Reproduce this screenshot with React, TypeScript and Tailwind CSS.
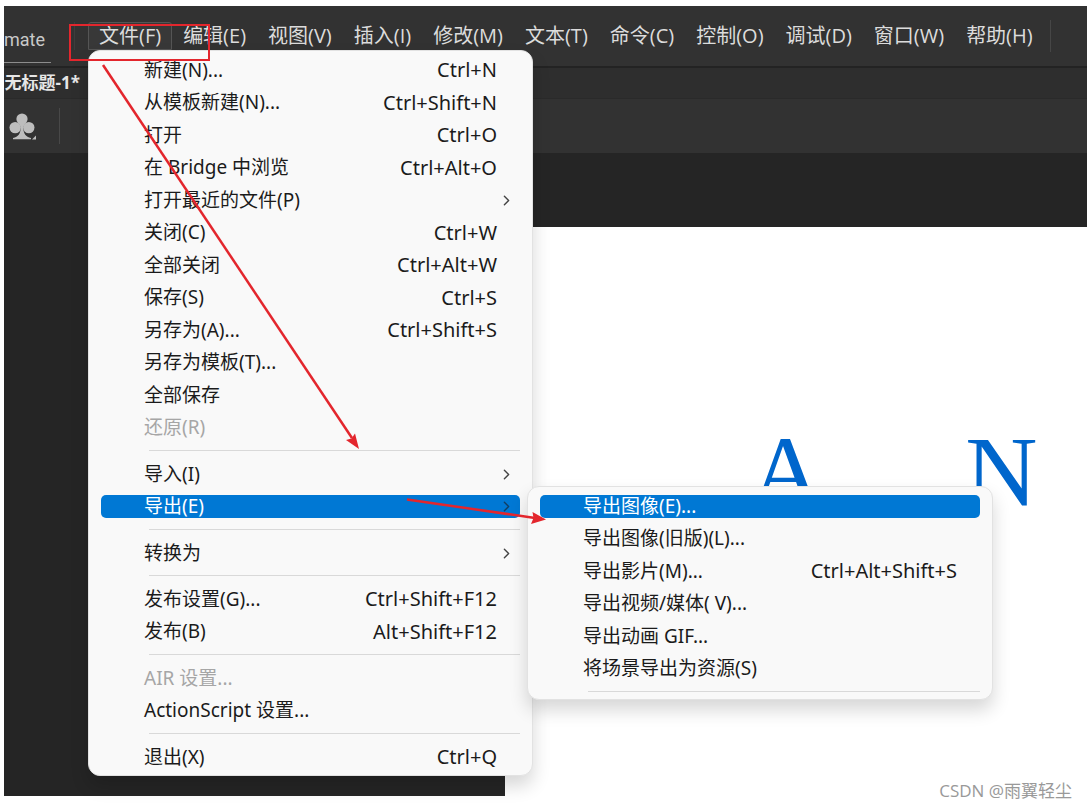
import { useState } from 'react';
import { ChevronRight } from 'lucide-react';

interface MenuEntry {
  label: string;
  shortcut?: string;
  disabled?: boolean;
  children?: boolean;
  submenu?: MenuEntry[][];
}

const menuBar = [
  '文件(F)',
  '编辑(E)',
  '视图(V)',
  '插入(I)',
  '修改(M)',
  '文本(T)',
  '命令(C)',
  '控制(O)',
  '调试(D)',
  '窗口(W)',
  '帮助(H)',
];

const exportMenu: MenuEntry[][] = [
  [
    { label: '导出图像(E)...' },
    { label: '导出图像(旧版)(L)...' },
    { label: '导出影片(M)...', shortcut: 'Ctrl+Alt+Shift+S' },
    { label: '导出视频/媒体( V)...' },
    { label: '导出动画 GIF...' },
    { label: '将场景导出为资源(S)' },
  ],
  [],
];

const fileMenu: MenuEntry[][] = [
  [
    { label: '新建(N)...', shortcut: 'Ctrl+N' },
    { label: '从模板新建(N)...', shortcut: 'Ctrl+Shift+N' },
    { label: '打开', shortcut: 'Ctrl+O' },
    { label: '在 Bridge 中浏览', shortcut: 'Ctrl+Alt+O' },
    { label: '打开最近的文件(P)', children: true },
    { label: '关闭(C)', shortcut: 'Ctrl+W' },
    { label: '全部关闭', shortcut: 'Ctrl+Alt+W' },
    { label: '保存(S)', shortcut: 'Ctrl+S' },
    { label: '另存为(A)...', shortcut: 'Ctrl+Shift+S' },
    { label: '另存为模板(T)...' },
    { label: '全部保存' },
    { label: '还原(R)', disabled: true },
  ],
  [
    { label: '导入(I)', children: true },
    { label: '导出(E)', children: true, submenu: exportMenu },
  ],
  [{ label: '转换为', children: true }],
  [
    { label: '发布设置(G)...', shortcut: 'Ctrl+Shift+F12' },
    { label: '发布(B)', shortcut: 'Alt+Shift+F12' },
  ],
  [
    { label: 'AIR 设置...', disabled: true },
    { label: 'ActionScript 设置...' },
  ],
  [{ label: '退出(X)', shortcut: 'Ctrl+Q' }],
];

interface MenuPanelProps {
  groups: MenuEntry[][];
  initial: string;
  className: string;
}

function MenuPanel({ groups, initial, className }: MenuPanelProps) {
  const [active, setActive] = useState(initial);

  return (
    <div
      className={`absolute z-10 rounded-xl border border-[#e2e2e2] bg-[#f9f9f9] font-['Noto_Sans','Noto_Sans_CJK_SC',sans-serif] text-[19px] text-[#1b1b1b] shadow-[0_10px_18px_rgba(0,0,0,0.16)] ${className}`}
    >
      {groups.map((group, i) => (
        <div key={i}>
          {i > 0 && (
            <div className="h-[14px] pt-[6px] pr-3 pl-[60px]">
              <hr className="border-[#d9d9d9]" />
            </div>
          )}
          <ul>
            {group.map(item => {
              const isActive = item.label === active;
              return (
                <li key={item.label} className="relative flex items-center px-3 odd:h-8 even:h-[33px]">
                  <button
                    disabled={item.disabled}
                    onClick={() => setActive(item.label)}
                    className={`flex h-[23px] w-full items-center justify-between rounded-[5px] pl-[43px] whitespace-nowrap disabled:text-[#a6a6a6] ${
                      isActive ? 'bg-[#0078d4] text-white' : ''
                    } ${item.children ? 'pr-[5px]' : 'pr-[23px]'}`}
                  >
                    <span>{item.label}</span>
                    {item.shortcut && <span className="text-[20px]">{item.shortcut}</span>}
                    {item.children && (
                      <ChevronRight size={17} strokeWidth={2} className={isActive ? 'text-[#123f63]' : 'text-[#444]'} />
                    )}
                  </button>
                  {item.submenu && isActive && (
                    <MenuPanel
                      groups={item.submenu}
                      initial="导出图像(E)..."
                      className="-top-1 left-full -ml-[5px] w-[466px] pt-[3px]"
                    />
                  )}
                </li>
              );
            })}
          </ul>
        </div>
      ))}
    </div>
  );
}

function Header() {
  return (
    <header className="flex h-[62px] items-start border-b-2 border-[#232323] bg-[#323232] text-[#dcdcdc]">
      <div className="flex w-[47px] justify-end border-b border-[#8c8c8c] pt-5 pr-[6px] pb-2 font-['Roboto',sans-serif] text-[18px] leading-7 text-[#c9c9c9]">
        mate
      </div>
      <div className="mt-4 mr-[13px] ml-[23px] h-7 w-px bg-[#3d3d3d]" />
      <ul className="mt-4 flex">
        {menuBar.map((label, i) => (
          <li key={label} className="relative">
            <button
              className={`h-7 border px-[10px] text-[20px] leading-6 whitespace-nowrap ${
                i === 0 ? 'rounded-t-[3px] border-[#555] bg-[#383838]' : 'border-transparent'
              }`}
            >
              {label}
            </button>
            {i === 0 && <MenuPanel groups={fileMenu} initial="导出(E)" className="top-full left-0 w-[445px] pt-[3px] pb-[2px]" />}
          </li>
        ))}
      </ul>
      <div className="mt-[14px] ml-[6px] h-8 w-px bg-[#464646]" />
    </header>
  );
}

function ClubIcon() {
  return (
    <svg width="28" height="28" viewBox="0 0 28 28" fill="#bdbdbd" aria-hidden="true">
      <circle cx="13" cy="7" r="5.6" />
      <circle cx="6.2" cy="15.6" r="5.7" />
      <circle cx="19.8" cy="15.6" r="5.7" />
      <path d="M10 11h6l-1.800 4.500c.3 6 2.500 9.500 7.800 10.500v1.300H4V26c5.300-1 7.500-4.500 7.800-10.500z" />
      <path d="M27 23.500V27.500H23z" />
    </svg>
  );
}

// Red markup drawn over the window
function Annotations() {
  return (
    <svg className="pointer-events-none absolute top-0 left-0 z-20" width="600" height="560" fill="none" stroke="#e3262d" aria-hidden="true">
      <rect x="70" y="25" width="139" height="35" strokeWidth="2" />
      <path d="M103 65L352 438" strokeWidth="2.500" />
      <path d="M359 449L346 440L351.500 438.500L355 433.500Z" fill="#e3262d" stroke="none" />
      <path d="M407 499.500L535 518" strokeWidth="2.500" />
      <path d="M546 519.500L531 524L533.500 518L532.500 512Z" fill="#e3262d" stroke="none" />
    </svg>
  );
}

export default function App() {
  return (
    <div className="relative flex h-screen flex-col overflow-hidden bg-white pt-[6px] pb-[13px] pl-1 font-['Open_Sans','Noto_Sans_CJK_SC',sans-serif]">
      <Header />
      <div className="flex h-[31px] shrink-0 items-center border-b border-[#2a2a2a] bg-[#2e2e2e]">
        <div className="flex w-[76px] justify-end text-[17px] leading-6 font-bold whitespace-nowrap text-[#e6e6e6]">
          无标题-1*
        </div>
      </div>
      <div className="flex h-[54px] shrink-0 items-center bg-[#323232] pl-[5px]">
        <button aria-label="club">
          <ClubIcon />
        </button>
        <div className="ml-[22px] h-9 w-px bg-[#484848]" />
      </div>
      <main className="flex min-h-0 flex-1 bg-[#252525] pt-[74px]">
        <div className="w-[501px] shrink-0" />
        <div className="flex flex-1 gap-[143px] bg-white pt-[195px] pl-[245px] font-['Liberation_Serif',serif] text-[100px] leading-none text-[#0066cc]">
          <span>A</span>
          <span>N</span>
        </div>
      </main>
      <p className="absolute right-[15px] bottom-[6px] text-[17px] leading-6 text-[#999]">CSDN @雨翼轻尘</p>
      <Annotations />
    </div>
  );
}
